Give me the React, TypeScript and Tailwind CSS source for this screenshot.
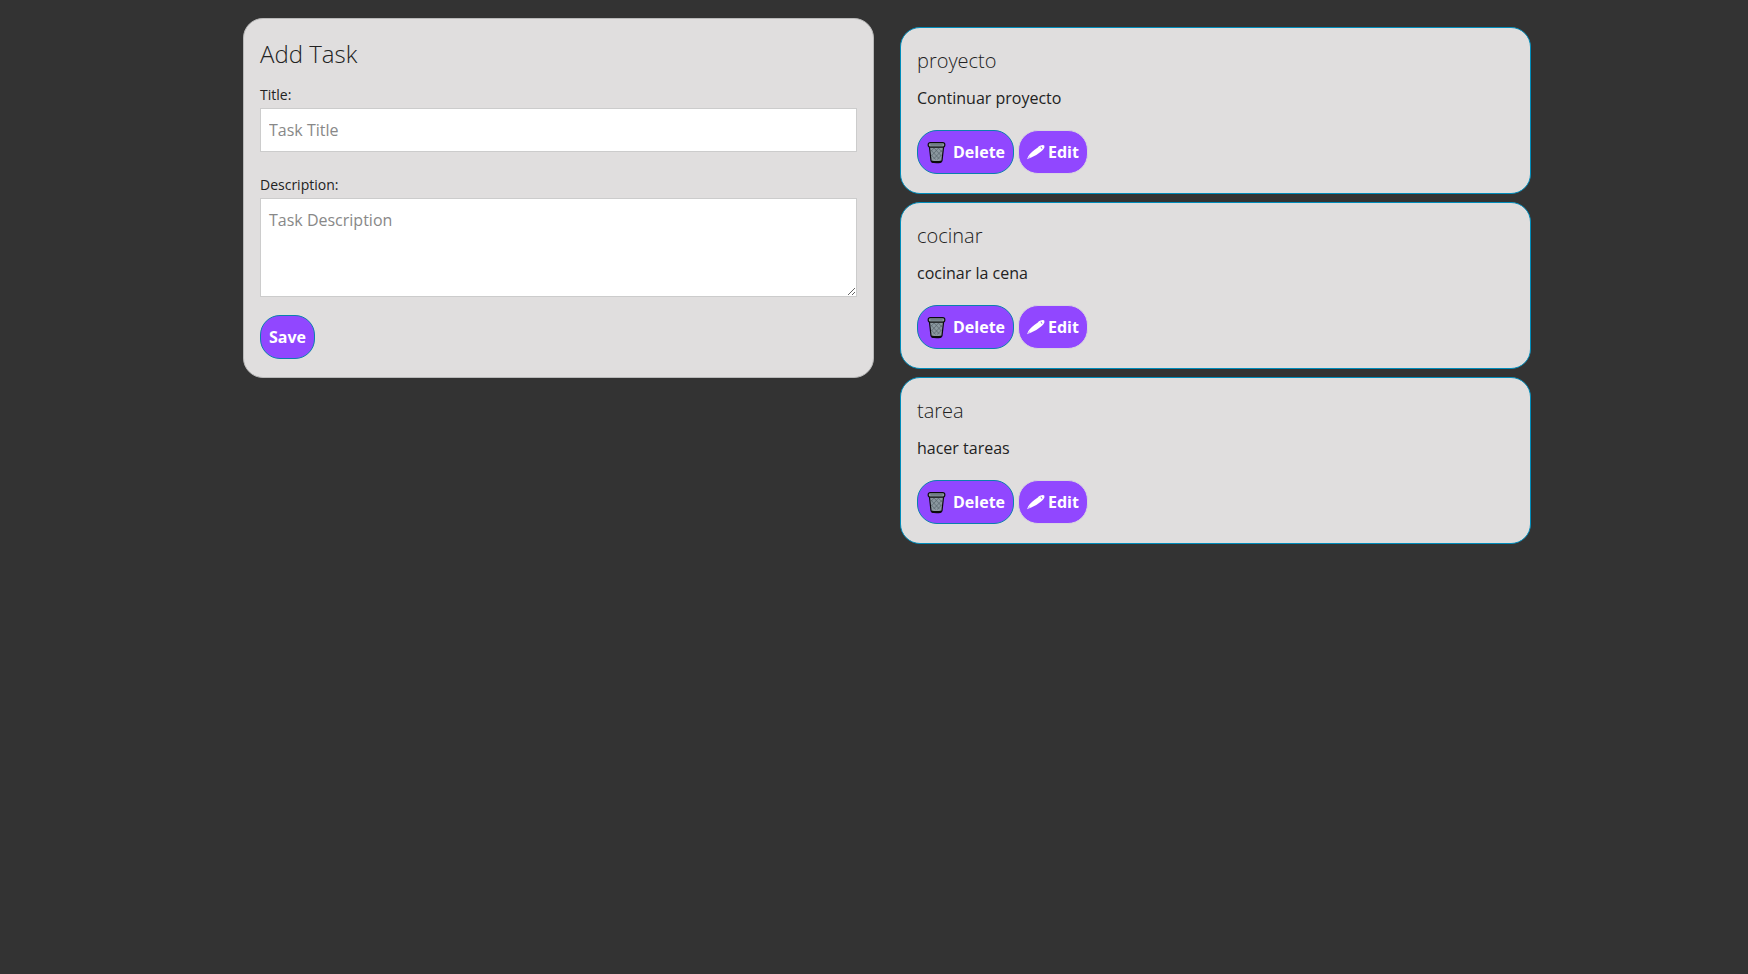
import { useState } from "react";

type Task = { id: number; title: string; description: string };

const tasks: Task[] = [
  { id: 1, title: "proyecto", description: "Continuar proyecto" },
  { id: 2, title: "cocinar", description: "cocinar la cena" },
  { id: 3, title: "tarea", description: "hacer tareas" },
];

function TrashIcon() {
  return (
    <svg viewBox="0 0 20 24" className="h-6 w-5" aria-hidden="true">
      <path d="M3.2 5 5 20.6q.2 2 5.5 2t5.5-2L17.8 5Z" fill="#8b989f" stroke="#0b0b0d" strokeWidth="1.2" />
      <path d="M4.8 10l8.6 9M8 8l7.4 8M12.4 8l3.6 4M5.2 15l4.4 4.4M16.2 10l-8.6 9M12.6 8l-7.2 8M8 8l-3 3.4M15.6 15l-4.4 4.4" stroke="#56636b" strokeWidth=".7" />
      <rect x="2.2" y="2.6" width="16.6" height="4.6" rx="2" fill="#8b989f" stroke="#0b0b0d" strokeWidth="1.2" />
      <path d="M4.4 4.9h12.2" stroke="#5e6b73" strokeWidth="1" />
      <path d="M5.4 20.4q5.1 1.4 10.2 0l-.3 2q-4.8 1.2-9.6 0Z" fill="#0b0b0d" />
    </svg>
  );
}

function PencilIcon() {
  return (
    <svg viewBox="0 0 18 18" className="size-[18px]" aria-hidden="true">
      <path d="M0 16.2 1.4 13Q3.4 9.4 10.8 4.4 11.6 3 13.6 2.4 16.6 1.2 17.4 2.8 18 4.6 16 6.8L14.4 8.2Q9.6 12.4 4.2 14.4Z" fill="#fff" />
      <path d="m14 3.8.9 1.9" stroke="#9147ff" strokeWidth=".9" />
      <path d="M.6 15.8 3 13.6" stroke="#9147ff" strokeWidth=".5" />
    </svg>
  );
}

const button =
  "inline-flex h-11 items-center rounded-[20px] border bg-[#9147ff] px-2 text-[16px] leading-6 font-bold text-white";
const field =
  "block w-full border border-[#cccccc] bg-white px-2 text-[16px] leading-6 text-[#222222] placeholder:text-[#888888]";

export default function App() {
  const [title, setTitle] = useState("");
  const [description, setDescription] = useState("");
  return (
    <div className="min-h-screen bg-[#333333] px-4 pt-[18px] pb-4 font-['Open_Sans',sans-serif] text-[#222222]">
      <main className="mx-auto grid max-w-[1314px] grid-cols-1 items-start gap-x-[26px] lg:grid-cols-2 lg:pl-[26px]">
        <form
          onSubmit={(e) => e.preventDefault()}
          className="rounded-[20px] border border-[#b9b9b9] bg-[#e0dede] px-4 pt-4 pb-[18px]"
        >
          <h1 className="mb-[10px] text-[24px] leading-[38px] font-light">Add Task</h1>
          <label htmlFor="title" className="block text-[14px] leading-6">Title:</label>
          <input id="title" className={`${field} mt-px h-11`} placeholder="Task Title" value={title} onChange={(e) => setTitle(e.target.value)} />
          <label htmlFor="description" className="mt-[21px] block text-[14px] leading-6">Description:</label>
          <textarea id="description" className={`${field} mt-px h-[99px] resize-y py-[9px]`} placeholder="Task Description" value={description} onChange={(e) => setDescription(e.target.value)} />
          <button type="submit" className={`${button} mt-[18px] border-[#0a80ae]`}>Save</button>
        </form>
        <section className="flex flex-col gap-2 pt-[9px]">
          {tasks.map((task) => (
            <article key={task.id} className="rounded-[20px] border border-[#008cba] bg-[#e0dede] px-4 pt-4 pb-[19px]">
              <h2 className="text-[20px] leading-[34px] font-light">{task.title}</h2>
              <p className="mt-2 text-[16px] leading-6">{task.description}</p>
              <div className="mt-5 flex gap-1">
                <button type="button" className={`${button} gap-[7px] border-[#0a80ae]`}><TrashIcon />Delete</button>
                <button type="button" className={`${button} gap-[3px] border-[#d9d5df]`}><PencilIcon />Edit</button>
              </div>
            </article>
          ))}
        </section>
      </main>
    </div>
  );
}
